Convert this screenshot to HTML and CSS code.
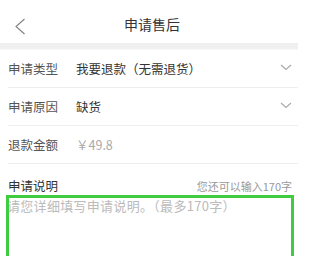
FILE: index.html
```html
<!DOCTYPE html>
<html lang="zh">
<head>
<meta charset="utf-8">
<link rel="stylesheet" href="styles.css">
</head>
<body>
<div class="page">
  <header class="topbar">
    <svg class="back" width="12" height="17" viewBox="0 0 12 17"><path d="M10.5 1 L2 8.5 L10.5 16" fill="none" stroke="#808080" stroke-width="1.1"/></svg>
    <div class="title">申请售后</div>
  </header>
  <div class="band"></div>
  <div class="row">
    <span class="label">申请类型</span>
    <span class="value">我要退款（无需退货）</span>
    <svg class="chev" width="12" height="7" viewBox="0 0 12 7"><path d="M1 1 L6 5.5 L11 1" fill="none" stroke="#aaa" stroke-width="1.2"/></svg>
  </div>
  <div class="row">
    <span class="label">申请原因</span>
    <span class="value">缺货</span>
    <svg class="chev" width="12" height="7" viewBox="0 0 12 7"><path d="M1 1 L6 5.5 L11 1" fill="none" stroke="#aaa" stroke-width="1.2"/></svg>
  </div>
  <div class="row">
    <span class="label">退款金额</span>
    <span class="value muted">￥49.8</span>
  </div>
  <div class="desc-head">
    <span class="desc-label">申请说明</span>
    <span class="hint">您还可以输入170字</span>
  </div>
  <div class="textbox">
    <span class="placeholder">请您详细填写申请说明。（最多170字）</span>
  </div>
</div>
</body>
</html>
```
FILE: styles.css
```css
html, body {
  margin: 0;
  padding: 0;
  background: #fff;
}
body {
  font-family: "Noto Sans CJK SC", "Noto Sans", sans-serif;
  width: 304px;
  height: 256px;
  overflow: hidden;
}
.page {
  display: flex;
  flex-direction: column;
}
.topbar {
  height: 43px;
  display: flex;
  align-items: center;
  position: relative;
}
.back {
  margin-left: 14px;
  margin-top: 6px;
  position: relative;
  top: 2px;
}
.title {
  position: absolute;
  left: 0;
  right: 0;
  top: 14px;
  text-align: center;
  font-size: 14px;
  line-height: 20px;
  color: #333;
}
.band {
  height: 6px;
  background: #f0f0f0;
  margin-right: 6px;
  border-bottom: 1px solid #f8f8f8;
}
.row {
  height: 37px;
  margin-left: 8px;
  margin-right: 6px;
  border-bottom: 1px solid #eeeeee;
  display: flex;
  align-items: center;
  font-size: 12.5px;
}
.label {
  width: 68px;
  color: #555;
}
.value {
  flex: 1;
  color: #333;
}
.value.muted {
  color: #aaa;
}
.chev {
  margin-right: 6px;
  margin-top: -2px;
}
.desc-head {
  height: 32px;
  margin-left: 8px;
  margin-right: 12px;
  display: flex;
  align-items: flex-end;
  justify-content: space-between;
}
.desc-label {
  font-size: 12.5px;
  color: #333;
  line-height: 18px;
  margin-bottom: 1px;
}
.hint {
  font-size: 11px;
  color: #999;
  line-height: 18px;
  margin-bottom: 1px;
}
.textbox {
  margin: 0 10px 0 6px;
  height: 80px;
  outline: 3px solid #40cc40;
  outline-offset: -3px;
  padding: 3px 0 0 1px;
  display: flex;
  margin-top: -1px;
}
.placeholder {
  font-size: 13px;
  line-height: 16px;
  color: #bbb;
  white-space: nowrap;
  letter-spacing: 0.3px;
}
```
